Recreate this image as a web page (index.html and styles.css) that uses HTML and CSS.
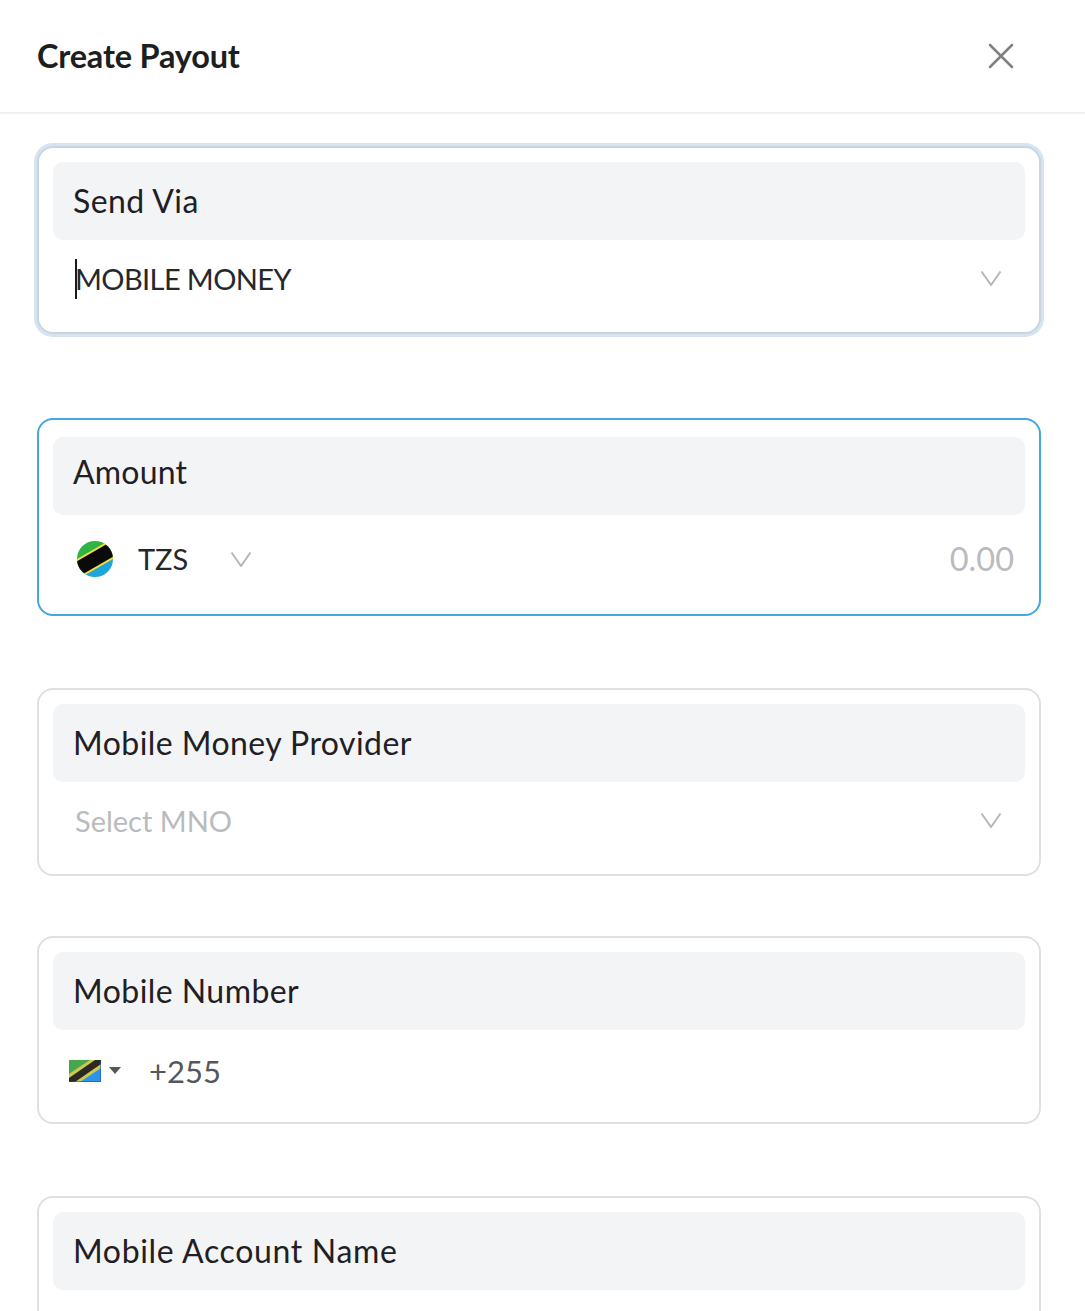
FILE: index.html
```html
<!DOCTYPE html>
<html lang="en">
<head>
<meta charset="utf-8">
<title>Create Payout</title>
<link rel="stylesheet" href="styles.css">
</head>
<body>
<header class="header">
  <h1 class="title">Create Payout</h1>
  <svg class="close" width="26" height="26" viewBox="0 0 26 26" aria-label="Close"><path d="M2 2 24 24M24 2 2 24"/></svg>
</header>
<main class="form">
  <section class="card card-focus card-via">
    <div class="label">Send Via</div>
    <div class="control control-select">
      <span class="caret"></span><span class="value value-via">MOBILE MONEY</span>
      <svg class="chev" width="22" height="16" viewBox="0 0 22 16"><path d="M1.500 1.500 11 15 20.500 1.500"/></svg>
    </div>
  </section>
  <section class="card card-active card-amount">
    <div class="label label-amount">Amount</div>
    <div class="control control-amount">
      <svg class="flag-round" width="36" height="36" viewBox="0 0 36 36">
        <defs><clipPath id="c"><circle cx="18" cy="18" r="18"/></clipPath></defs>
        <g clip-path="url(#c)">
          <g transform="rotate(-30 18 18)">
            <rect x="-12" y="-12" width="60" height="30" fill="#2fb344"/>
            <rect x="-12" y="18" width="60" height="30" fill="#1ea5dc"/>
            <rect x="-12" y="9" width="60" height="18" fill="#f1dc3c"/>
            <rect x="-12" y="11" width="60" height="14" fill="#0a0a0a"/>
          </g>
        </g>
      </svg>
      <span class="currency">TZS</span>
      <svg class="chev chev-currency" width="22" height="16" viewBox="0 0 22 16"><path d="M1.500 1.500 11 15 20.500 1.500"/></svg>
      <span class="amount-placeholder">0.00</span>
    </div>
  </section>
  <section class="card card-provider">
    <div class="label">Mobile Money Provider</div>
    <div class="control control-select">
      <span class="value placeholder">Select MNO</span>
      <svg class="chev" width="22" height="16" viewBox="0 0 22 16"><path d="M1.500 1.500 11 15 20.500 1.500"/></svg>
    </div>
  </section>
  <section class="card card-number">
    <div class="label">Mobile Number</div>
    <div class="control control-phone">
      <svg class="flag-rect" width="32" height="22" viewBox="0 0 32 22">
        <rect width="32" height="22" fill="#46a84c"/>
        <path d="M32 0V22H0Z" fill="#2e93ea"/>
        <path d="M0 22V14L21 0H32V8L11 22Z" fill="#cfc74f"/>
        <path d="M0 22V18L26 0H32V4L6 22Z" fill="#2a2a22"/>
        <path d="M0 21H32V22H0ZM31 0H32V22H31Z" fill="#1c4fa8" opacity=".55"/>
      </svg>
      <span class="tri"></span>
      <span class="dial">+255</span>
    </div>
  </section>
  <section class="card card-name">
    <div class="label label-name">Mobile Account Name</div>
    <div class="control"></div>
  </section>
</main>
</body>
</html>
```
FILE: styles.css
```css
html, body {
  margin: 0;
  padding: 0;
  height: 1311px;
  overflow: hidden;
  background: #fff;
}
body {
  font-family: "Lato", "Inter", sans-serif;
  color: #1f2023;
}
.header {
  display: flex;
  align-items: center;
  justify-content: space-between;
  height: 112px;
  padding: 0 71px 0 37px;
  border-bottom: 2px solid #f0f1f2;
}
.title {
  margin: 0 0 2px;
  font-size: 32.5px;
  font-weight: 700;
  letter-spacing: -0.2px;
  color: #1d1e20;
}
.close path {
  fill: none;
  stroke: #808080;
  stroke-width: 2.500;
  stroke-linecap: round;
}
.form {
  display: flex;
  flex-direction: column;
  padding: 0 44px 0 37px;
}
.card {
  box-sizing: border-box;
  height: 188px;
  padding: 14px;
  border: 2px solid #dfe0e2;
  border-radius: 16px;
  background: #fff;
}
.card-via { margin-top: 32px; box-shadow: 0 0 0 3px #d5e4f5; border-color: #ccd4de; }
.card-amount { margin-top: 84px; height: 198px; border-color: #46a6e0; padding-top: 17px; }
.card-provider { margin-top: 72px; }
.card-number { margin-top: 60px; }
.card-name { margin-top: 72px; height: 260px; }
.label {
  box-sizing: border-box;
  height: 78px;
  padding: 0 20px 1px;
  display: flex;
  align-items: center;
  background: #f3f4f6;
  border-radius: 10px;
  font-size: 32px;
  letter-spacing: 0.45px;
  color: #1f2023;
}
.label-amount { padding-bottom: 9px; letter-spacing: 0.2px; }
.label-name { letter-spacing: 0.65px; }
.control {
  position: relative;
  display: flex;
  align-items: center;
  height: 77px;
  font-size: 29px;
}
.control-select { padding-left: 22px; }
.value { color: #26272a; }
.value-via { letter-spacing: -0.6px; }
.placeholder { color: #b9bbbe; }
.caret {
  position: absolute;
  left: 22px;
  top: 19px;
  width: 2px;
  height: 40px;
  background: #1a1a1a;
}
.chev { position: absolute; right: 23px; top: 30px; }
.chev path {
  fill: none;
  stroke: #b5b7b9;
  stroke-width: 2;
}
.control-amount { height: 87px; padding-left: 24px; }
.flag-round { flex: none; }
.currency { margin-left: 25px; color: #26272a; }
.chev-currency { position: static; margin-left: 42px; }
.amount-placeholder {
  margin-left: auto;
  margin-right: 11px;
  font-size: 32.5px;
  color: #b9bbbe;
}
.control-phone { padding-left: 16px; height: 81px; }
.flag-rect { flex: none; }
.tri {
  margin-left: 8px;
  width: 0;
  height: 0;
  border-left: 6px solid transparent;
  border-right: 6px solid transparent;
  border-top: 7px solid #555;
}
.dial { margin-left: 28px; font-size: 31px; color: #55575b; }
```
